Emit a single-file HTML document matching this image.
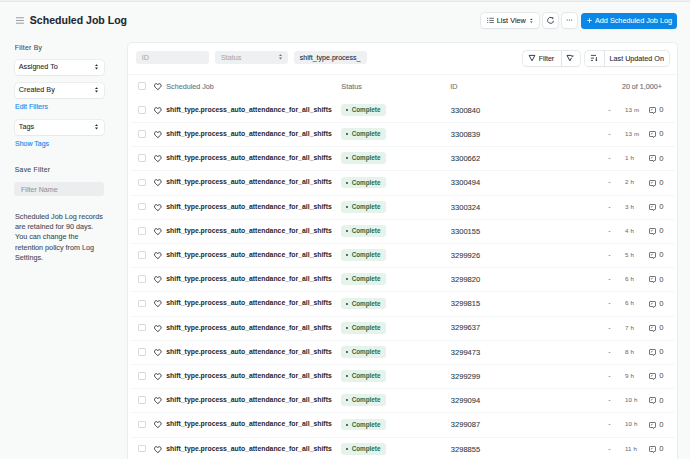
<!DOCTYPE html>
<html><head><meta charset="utf-8"><style>
*{box-sizing:border-box;margin:0;padding:0}
html,body{width:690px;height:459px;overflow:hidden}
body{background:#f8f9f9;font-family:"Liberation Sans",sans-serif;color:#1f272e;position:relative}
.abs{position:absolute;display:block}
.t{position:absolute;white-space:nowrap;line-height:0;-webkit-text-stroke:0.08px currentColor}
.topband{position:absolute;left:0;top:0;width:690px;height:2px;background:#eff0f2;border-bottom:0.6px solid #e6e8ea}
.btn{position:absolute;background:#fff;border-radius:3.5px;box-shadow:0 0 0 0.7px #dfe3e6,0 0.7px 1.2px rgba(0,0,0,0.07)}
.sel{position:absolute;left:14.6px;width:89.4px;height:15.1px;background:#fff;border-radius:3.5px;box-shadow:0 0 0 0.6px #e2e5e8,0 0.6px 1.2px rgba(0,0,0,0.05)}
.card{position:absolute;left:127.2px;top:42.2px;width:551px;height:460px;background:#fff;border-radius:5px;border:0.8px solid #eaecee}
.inp{position:absolute;height:13.3px;background:#eef0f2;border-radius:3px}
.cb{position:absolute;width:7.8px;height:7.8px;border-radius:2px;box-shadow:inset 0 0 0 0.7px #c9ced3}
.pill{position:absolute;width:44.5px;height:11.8px;background:#e5f3ea;border-radius:3px;color:#1f6c47;font-size:6.32px;font-weight:700;line-height:11.8px;padding-left:10.5px;white-space:nowrap}
.dot{position:absolute;left:5.3px;top:5px;width:2px;height:2px;border-radius:1px;background:#1a4a33}
</style></head><body>
<div class="topband"></div>
<svg class="abs" style="left:16px;top:16px" width="8" height="8" viewBox="0 0 8 8"><path d="M0 1.75 H7.9 M0 4.47 H7.9 M0 7.2 H7.9" stroke="#7d858c" stroke-width="0.8"/></svg>
<div class="t" style="left:29.80px;top:20px;font-size:10.56px;color:#1f272e;font-weight:700">Scheduled Job Log</div>
<div class="btn" style="left:481px;top:12.5px;width:58.2px;height:15.6px"></div>
<svg class="abs" style="left:487px;top:17px" width="7" height="6" viewBox="0 0 7 6"><path d="M2.4 1.3 H6.9 M2.4 3.45 H6.9 M2.4 5.6 H6.9" stroke="#333c44" stroke-width="0.75"/><path d="M0.1 1.3 H1.2 M0.1 3.45 H1.2 M0.1 5.6 H1.2" stroke="#333c44" stroke-width="0.75"/></svg>
<div class="t" style="left:496.80px;top:21px;font-size:7.31px;color:#1f272e;">List View</div>
<svg class="abs" style="left:529.5px;top:17.5px" width="3" height="6" viewBox="0 0 3 6"><path d="M0.1 1.9 L1.35 0.6 L2.6 1.9 Z M0.1 3.5 L1.35 5 L2.6 3.5 Z" fill="#333c44"/></svg>
<div class="btn" style="left:542.7px;top:12.5px;width:15.6px;height:15.6px"></div>
<svg class="abs" style="left:546px;top:16px" width="9" height="9" viewBox="0 0 9 9"><path d="M7.46 4.8 A2.9 2.9 0 1 1 6.05 1.79" fill="none" stroke="#2b333a" stroke-width="0.9"/><path d="M5.5 1.3 L7.6 1.5 L6.9 3.6 Z" fill="#2b333a"/></svg>
<div class="btn" style="left:561.8px;top:12.5px;width:15.5px;height:15.6px"></div>
<svg class="abs" style="left:566px;top:19.4px" width="8" height="2" viewBox="0 0 8 2"><circle cx="1.2" cy="1" r="0.6" fill="#333c44"/><circle cx="3.4" cy="1" r="0.6" fill="#333c44"/><circle cx="5.6" cy="1" r="0.6" fill="#333c44"/></svg>
<div class="abs" style="left:581.2px;top:12.5px;width:96px;height:16px;background:#0b87e8;border-radius:3.5px"></div>
<svg class="abs" style="left:587.3px;top:18px" width="5" height="5" viewBox="0 0 5 5"><path d="M2.5 0.2 V4.8 M0.2 2.5 H4.8" stroke="#fff" stroke-width="0.8"/></svg>
<div class="t" style="left:595.00px;top:21px;font-size:7.25px;color:#fff;-webkit-text-stroke:0.05px #fff">Add Scheduled Job Log</div>
<div class="t" style="left:14.80px;top:48px;font-size:6.8px;color:#444c54;letter-spacing:0.28px;-webkit-text-stroke:0.1px #444c54">Filter By</div>
<div class="sel" style="top:59.60px"></div>
<div class="t" style="left:18.80px;top:67px;font-size:7.2px;color:#1f272e;">Assigned To</div>
<svg class="abs" style="left:95.2px;top:64.3px" width="3" height="6" viewBox="0 0 3 6"><path d="M0 2.1 L1.5 0.3 L3 2.1 Z M0 3.6 L1.5 5.5 L3 3.6 Z" fill="#1f272e"/></svg>
<div class="sel" style="top:82.60px"></div>
<div class="t" style="left:18.80px;top:90px;font-size:7.2px;color:#1f272e;">Created By</div>
<svg class="abs" style="left:95.2px;top:87.3px" width="3" height="6" viewBox="0 0 3 6"><path d="M0 2.1 L1.5 0.3 L3 2.1 Z M0 3.6 L1.5 5.5 L3 3.6 Z" fill="#1f272e"/></svg>
<div class="sel" style="top:119.70px"></div>
<div class="t" style="left:18.80px;top:127px;font-size:7.2px;color:#1f272e;">Tags</div>
<svg class="abs" style="left:95.2px;top:124.4px" width="3" height="6" viewBox="0 0 3 6"><path d="M0 2.1 L1.5 0.3 L3 2.1 Z M0 3.6 L1.5 5.5 L3 3.6 Z" fill="#1f272e"/></svg>
<div class="t" style="left:15.00px;top:107px;font-size:7px;color:#2490ef;-webkit-text-stroke:0.15px #2490ef">Edit Filters</div>
<div class="t" style="left:15.00px;top:144px;font-size:7px;color:#2490ef;-webkit-text-stroke:0.15px #2490ef">Show Tags</div>
<div class="t" style="left:14.80px;top:170px;font-size:6.8px;color:#444c54;letter-spacing:0.28px;-webkit-text-stroke:0.1px #444c54">Save Filter</div>
<div class="abs" style="left:14.3px;top:182.2px;width:90px;height:13.5px;background:#ebedef;border-radius:3px"></div>
<div class="t" style="left:21.00px;top:190px;font-size:7.1px;color:#8f979e;">Filter Name</div>
<div class="t" style="left:15.00px;top:217px;font-size:7.23px;color:#434b53;">Scheduled Job Log records</div>
<div class="t" style="left:15.00px;top:227px;font-size:7.23px;color:#434b53;">are retained for 90 days.</div>
<div class="t" style="left:15.00px;top:237px;font-size:7.23px;color:#434b53;">You can change the</div>
<div class="t" style="left:15.00px;top:248px;font-size:7.23px;color:#434b53;">retention policy from Log</div>
<div class="t" style="left:15.00px;top:258px;font-size:7.23px;color:#434b53;">Settings.</div>
<div class="card"></div>
<div class="inp" style="left:136px;top:50.5px;width:73px"></div>
<div class="t" style="left:141.80px;top:58px;font-size:7.2px;color:#a3abb2;">ID</div>
<div class="inp" style="left:215px;top:50.5px;width:73px"></div>
<div class="t" style="left:220.90px;top:58px;font-size:7.2px;color:#a3abb2;">Status</div>
<svg class="abs" style="left:278.6px;top:54.4px" width="3" height="6" viewBox="0 0 3 6"><path d="M0 2.1 L1.5 0.3 L3 2.1 Z M0 3.6 L1.5 5.5 L3 3.6 Z" fill="#687178"/></svg>
<div class="inp" style="left:294px;top:50.5px;width:73px"></div>
<div class="t" style="left:299.70px;top:58px;font-size:7.07px;color:#1f272e;">shift_type.process_</div>
<div class="btn" style="left:522.8px;top:51px;width:56.8px;height:14.9px"></div>
<div class="abs" style="left:560.7px;top:51px;width:0.7px;height:14.9px;background:#e2e5e8"></div>
<svg class="abs" style="left:528px;top:54px" width="8" height="8" viewBox="0 0 8 8"><path d="M1.1 1.4 H6.9 L4 6.8 Z" fill="none" stroke="#2b333a" stroke-width="0.95" stroke-linejoin="round"/></svg>
<div class="t" style="left:538.70px;top:59px;font-size:6.98px;color:#1f272e;">Filter</div>
<svg class="abs" style="left:566px;top:54px" width="8" height="8" viewBox="0 0 8 8"><path d="M5.3 1.4 H1 L3.9 6.8 L5.5 3.8" fill="none" stroke="#2b333a" stroke-width="0.95" stroke-linejoin="round"/><path d="M5.5 1.2 L7.3 3 M7.3 1.2 L5.5 3" stroke="#2b333a" stroke-width="0.8"/></svg>
<div class="btn" style="left:584.8px;top:51px;width:84.6px;height:14.9px"></div>
<div class="abs" style="left:603.5px;top:51px;width:0.7px;height:14.9px;background:#e2e5e8"></div>
<svg class="abs" style="left:590px;top:54px" width="8" height="8" viewBox="0 0 8 8"><path d="M0.9 1.4 H6 M0.9 4.1 H4 M0.9 6.4 H3" stroke="#333c44" stroke-width="0.9"/><path d="M6.4 3 V6.9" stroke="#333c44" stroke-width="0.9"/><path d="M5.2 5.7 L6.4 7.2 L7.6 5.7 Z" fill="#333c44"/></svg>
<div class="t" style="left:609.60px;top:59px;font-size:7.2px;color:#1f272e;">Last Updated On</div>
<div class="abs" style="left:128px;top:74px;width:549px;height:1px;background:#f3f4f5"></div>
<div class="cb" style="left:138px;top:82.2px"></div>
<svg class="abs" style="left:154px;top:82.6px" width="8" height="8" viewBox="0 0 8 8"><path d="M3.8 1.6 C3.3 0.8 2.6 0.6 2 0.7 C1 0.9 0.4 1.8 0.5 2.8 C0.6 3.8 1.5 4.7 3.8 6.6 C6.1 4.7 7 3.8 7.1 2.8 C7.2 1.8 6.6 0.9 5.6 0.7 C5 0.6 4.3 0.8 3.8 1.6 Z" fill="none" stroke="#2b333a" stroke-width="0.95" stroke-linejoin="round"/></svg>
<div class="t" style="left:166.30px;top:87px;font-size:7.2px;color:#687178;">Scheduled Job</div>
<div class="t" style="left:341.30px;top:87px;font-size:7.27px;color:#687178;">Status</div>
<div class="t" style="left:450.30px;top:87px;font-size:7.2px;color:#687178;">ID</div>
<div class="t" style="left:621.90px;top:87px;font-size:7.18px;color:#5f686f;">20 of 1,000+</div>
<div class="cb" style="left:138px;top:105.90px"></div>
<svg class="abs" style="left:154px;top:106.8px" width="8" height="8" viewBox="0 0 8 8"><path d="M3.8 1.6 C3.3 0.8 2.6 0.6 2 0.7 C1 0.9 0.4 1.8 0.5 2.8 C0.6 3.8 1.5 4.7 3.8 6.6 C6.1 4.7 7 3.8 7.1 2.8 C7.2 1.8 6.6 0.9 5.6 0.7 C5 0.6 4.3 0.8 3.8 1.6 Z" fill="none" stroke="#2b333a" stroke-width="0.95" stroke-linejoin="round"/></svg>
<div class="t" style="left:166.30px;top:110px;font-size:6.86px;color:#1f272e;font-weight:700;-webkit-text-stroke:0">shift_type.process_auto_attendance_for_all_shifts</div>
<div class="pill" style="left:341.2px;top:104.00px"><span class="dot"></span>Complete</div>
<div class="t" style="left:450.80px;top:111px;font-size:7.55px;color:#333c44;">3300840</div>
<div class="t" style="left:608.20px;top:110px;font-size:7px;color:#687178;">-</div>
<div class="t" style="left:625.00px;top:110px;font-size:6.2px;color:#687178;letter-spacing:0.12px;-webkit-text-stroke:0.05px #687178">13 m</div>
<svg class="abs" style="left:648px;top:106.0px" width="9" height="9" viewBox="0 0 9 9"><path d="M2.1 1.5 H6.9 Q7.5 1.5 7.5 2.1 V5.9 Q7.5 6.5 6.9 6.5 H6.2 L5.6 7.6 L5.1 6.5 H2.1 Q1.5 6.5 1.5 5.9 V2.1 Q1.5 1.5 2.1 1.5 Z" fill="none" stroke="#525a62" stroke-width="0.85" stroke-linejoin="round"/><path d="M2.9 4.2 L4.6 3.2" stroke="#525a62" stroke-width="0.8"/></svg>
<div class="t" style="left:659.30px;top:110px;font-size:7.6px;color:#3f474e;-webkit-text-stroke:0">0</div>
<div class="abs" style="left:130.6px;top:121.90px;width:544.2px;height:1px;background:#f5f6f7"></div>
<div class="cb" style="left:138px;top:130.10px"></div>
<svg class="abs" style="left:154px;top:131.0px" width="8" height="8" viewBox="0 0 8 8"><path d="M3.8 1.6 C3.3 0.8 2.6 0.6 2 0.7 C1 0.9 0.4 1.8 0.5 2.8 C0.6 3.8 1.5 4.7 3.8 6.6 C6.1 4.7 7 3.8 7.1 2.8 C7.2 1.8 6.6 0.9 5.6 0.7 C5 0.6 4.3 0.8 3.8 1.6 Z" fill="none" stroke="#2b333a" stroke-width="0.95" stroke-linejoin="round"/></svg>
<div class="t" style="left:166.30px;top:134px;font-size:6.86px;color:#1f272e;font-weight:700;-webkit-text-stroke:0">shift_type.process_auto_attendance_for_all_shifts</div>
<div class="pill" style="left:341.2px;top:128.20px"><span class="dot"></span>Complete</div>
<div class="t" style="left:450.80px;top:135px;font-size:7.55px;color:#333c44;">3300839</div>
<div class="t" style="left:608.20px;top:134px;font-size:7px;color:#687178;">-</div>
<div class="t" style="left:625.00px;top:134px;font-size:6.2px;color:#687178;letter-spacing:0.12px;-webkit-text-stroke:0.05px #687178">13 m</div>
<svg class="abs" style="left:648px;top:130.2px" width="9" height="9" viewBox="0 0 9 9"><path d="M2.1 1.5 H6.9 Q7.5 1.5 7.5 2.1 V5.9 Q7.5 6.5 6.9 6.5 H6.2 L5.6 7.6 L5.1 6.5 H2.1 Q1.5 6.5 1.5 5.9 V2.1 Q1.5 1.5 2.1 1.5 Z" fill="none" stroke="#525a62" stroke-width="0.85" stroke-linejoin="round"/><path d="M2.9 4.2 L4.6 3.2" stroke="#525a62" stroke-width="0.8"/></svg>
<div class="t" style="left:659.30px;top:134px;font-size:7.6px;color:#3f474e;-webkit-text-stroke:0">0</div>
<div class="abs" style="left:130.6px;top:146.10px;width:544.2px;height:1px;background:#f5f6f7"></div>
<div class="cb" style="left:138px;top:154.30px"></div>
<svg class="abs" style="left:154px;top:155.2px" width="8" height="8" viewBox="0 0 8 8"><path d="M3.8 1.6 C3.3 0.8 2.6 0.6 2 0.7 C1 0.9 0.4 1.8 0.5 2.8 C0.6 3.8 1.5 4.7 3.8 6.6 C6.1 4.7 7 3.8 7.1 2.8 C7.2 1.8 6.6 0.9 5.6 0.7 C5 0.6 4.3 0.8 3.8 1.6 Z" fill="none" stroke="#2b333a" stroke-width="0.95" stroke-linejoin="round"/></svg>
<div class="t" style="left:166.30px;top:158px;font-size:6.86px;color:#1f272e;font-weight:700;-webkit-text-stroke:0">shift_type.process_auto_attendance_for_all_shifts</div>
<div class="pill" style="left:341.2px;top:152.40px"><span class="dot"></span>Complete</div>
<div class="t" style="left:450.80px;top:159px;font-size:7.55px;color:#333c44;">3300662</div>
<div class="t" style="left:608.20px;top:158px;font-size:7px;color:#687178;">-</div>
<div class="t" style="left:625.00px;top:158px;font-size:6.2px;color:#687178;letter-spacing:0.12px;-webkit-text-stroke:0.05px #687178">1 h</div>
<svg class="abs" style="left:648px;top:154.4px" width="9" height="9" viewBox="0 0 9 9"><path d="M2.1 1.5 H6.9 Q7.5 1.5 7.5 2.1 V5.9 Q7.5 6.5 6.9 6.5 H6.2 L5.6 7.6 L5.1 6.5 H2.1 Q1.5 6.5 1.5 5.9 V2.1 Q1.5 1.5 2.1 1.5 Z" fill="none" stroke="#525a62" stroke-width="0.85" stroke-linejoin="round"/><path d="M2.9 4.2 L4.6 3.2" stroke="#525a62" stroke-width="0.8"/></svg>
<div class="t" style="left:659.30px;top:159px;font-size:7.6px;color:#3f474e;-webkit-text-stroke:0">0</div>
<div class="abs" style="left:130.6px;top:170.30px;width:544.2px;height:1px;background:#f5f6f7"></div>
<div class="cb" style="left:138px;top:178.50px"></div>
<svg class="abs" style="left:154px;top:179.4px" width="8" height="8" viewBox="0 0 8 8"><path d="M3.8 1.6 C3.3 0.8 2.6 0.6 2 0.7 C1 0.9 0.4 1.8 0.5 2.8 C0.6 3.8 1.5 4.7 3.8 6.6 C6.1 4.7 7 3.8 7.1 2.8 C7.2 1.8 6.6 0.9 5.6 0.7 C5 0.6 4.3 0.8 3.8 1.6 Z" fill="none" stroke="#2b333a" stroke-width="0.95" stroke-linejoin="round"/></svg>
<div class="t" style="left:166.30px;top:182px;font-size:6.86px;color:#1f272e;font-weight:700;-webkit-text-stroke:0">shift_type.process_auto_attendance_for_all_shifts</div>
<div class="pill" style="left:341.2px;top:176.60px"><span class="dot"></span>Complete</div>
<div class="t" style="left:450.80px;top:183px;font-size:7.55px;color:#333c44;">3300494</div>
<div class="t" style="left:608.20px;top:182px;font-size:7px;color:#687178;">-</div>
<div class="t" style="left:625.00px;top:182px;font-size:6.2px;color:#687178;letter-spacing:0.12px;-webkit-text-stroke:0.05px #687178">2 h</div>
<svg class="abs" style="left:648px;top:178.6px" width="9" height="9" viewBox="0 0 9 9"><path d="M2.1 1.5 H6.9 Q7.5 1.5 7.5 2.1 V5.9 Q7.5 6.5 6.9 6.5 H6.2 L5.6 7.6 L5.1 6.5 H2.1 Q1.5 6.5 1.5 5.9 V2.1 Q1.5 1.5 2.1 1.5 Z" fill="none" stroke="#525a62" stroke-width="0.85" stroke-linejoin="round"/><path d="M2.9 4.2 L4.6 3.2" stroke="#525a62" stroke-width="0.8"/></svg>
<div class="t" style="left:659.30px;top:183px;font-size:7.6px;color:#3f474e;-webkit-text-stroke:0">0</div>
<div class="abs" style="left:130.6px;top:194.50px;width:544.2px;height:1px;background:#f5f6f7"></div>
<div class="cb" style="left:138px;top:202.70px"></div>
<svg class="abs" style="left:154px;top:203.6px" width="8" height="8" viewBox="0 0 8 8"><path d="M3.8 1.6 C3.3 0.8 2.6 0.6 2 0.7 C1 0.9 0.4 1.8 0.5 2.8 C0.6 3.8 1.5 4.7 3.8 6.6 C6.1 4.7 7 3.8 7.1 2.8 C7.2 1.8 6.6 0.9 5.6 0.7 C5 0.6 4.3 0.8 3.8 1.6 Z" fill="none" stroke="#2b333a" stroke-width="0.95" stroke-linejoin="round"/></svg>
<div class="t" style="left:166.30px;top:207px;font-size:6.86px;color:#1f272e;font-weight:700;-webkit-text-stroke:0">shift_type.process_auto_attendance_for_all_shifts</div>
<div class="pill" style="left:341.2px;top:200.80px"><span class="dot"></span>Complete</div>
<div class="t" style="left:450.80px;top:208px;font-size:7.55px;color:#333c44;">3300324</div>
<div class="t" style="left:608.20px;top:207px;font-size:7px;color:#687178;">-</div>
<div class="t" style="left:625.00px;top:207px;font-size:6.2px;color:#687178;letter-spacing:0.12px;-webkit-text-stroke:0.05px #687178">3 h</div>
<svg class="abs" style="left:648px;top:202.8px" width="9" height="9" viewBox="0 0 9 9"><path d="M2.1 1.5 H6.9 Q7.5 1.5 7.5 2.1 V5.9 Q7.5 6.5 6.9 6.5 H6.2 L5.6 7.6 L5.1 6.5 H2.1 Q1.5 6.5 1.5 5.9 V2.1 Q1.5 1.5 2.1 1.5 Z" fill="none" stroke="#525a62" stroke-width="0.85" stroke-linejoin="round"/><path d="M2.9 4.2 L4.6 3.2" stroke="#525a62" stroke-width="0.8"/></svg>
<div class="t" style="left:659.30px;top:207px;font-size:7.6px;color:#3f474e;-webkit-text-stroke:0">0</div>
<div class="abs" style="left:130.6px;top:218.70px;width:544.2px;height:1px;background:#f5f6f7"></div>
<div class="cb" style="left:138px;top:226.90px"></div>
<svg class="abs" style="left:154px;top:227.8px" width="8" height="8" viewBox="0 0 8 8"><path d="M3.8 1.6 C3.3 0.8 2.6 0.6 2 0.7 C1 0.9 0.4 1.8 0.5 2.8 C0.6 3.8 1.5 4.7 3.8 6.6 C6.1 4.7 7 3.8 7.1 2.8 C7.2 1.8 6.6 0.9 5.6 0.7 C5 0.6 4.3 0.8 3.8 1.6 Z" fill="none" stroke="#2b333a" stroke-width="0.95" stroke-linejoin="round"/></svg>
<div class="t" style="left:166.30px;top:231px;font-size:6.86px;color:#1f272e;font-weight:700;-webkit-text-stroke:0">shift_type.process_auto_attendance_for_all_shifts</div>
<div class="pill" style="left:341.2px;top:225.00px"><span class="dot"></span>Complete</div>
<div class="t" style="left:450.80px;top:232px;font-size:7.55px;color:#333c44;">3300155</div>
<div class="t" style="left:608.20px;top:231px;font-size:7px;color:#687178;">-</div>
<div class="t" style="left:625.00px;top:231px;font-size:6.2px;color:#687178;letter-spacing:0.12px;-webkit-text-stroke:0.05px #687178">4 h</div>
<svg class="abs" style="left:648px;top:227.0px" width="9" height="9" viewBox="0 0 9 9"><path d="M2.1 1.5 H6.9 Q7.5 1.5 7.5 2.1 V5.9 Q7.5 6.5 6.9 6.5 H6.2 L5.6 7.6 L5.1 6.5 H2.1 Q1.5 6.5 1.5 5.9 V2.1 Q1.5 1.5 2.1 1.5 Z" fill="none" stroke="#525a62" stroke-width="0.85" stroke-linejoin="round"/><path d="M2.9 4.2 L4.6 3.2" stroke="#525a62" stroke-width="0.8"/></svg>
<div class="t" style="left:659.30px;top:231px;font-size:7.6px;color:#3f474e;-webkit-text-stroke:0">0</div>
<div class="abs" style="left:130.6px;top:242.90px;width:544.2px;height:1px;background:#f5f6f7"></div>
<div class="cb" style="left:138px;top:251.10px"></div>
<svg class="abs" style="left:154px;top:252.0px" width="8" height="8" viewBox="0 0 8 8"><path d="M3.8 1.6 C3.3 0.8 2.6 0.6 2 0.7 C1 0.9 0.4 1.8 0.5 2.8 C0.6 3.8 1.5 4.7 3.8 6.6 C6.1 4.7 7 3.8 7.1 2.8 C7.2 1.8 6.6 0.9 5.6 0.7 C5 0.6 4.3 0.8 3.8 1.6 Z" fill="none" stroke="#2b333a" stroke-width="0.95" stroke-linejoin="round"/></svg>
<div class="t" style="left:166.30px;top:255px;font-size:6.86px;color:#1f272e;font-weight:700;-webkit-text-stroke:0">shift_type.process_auto_attendance_for_all_shifts</div>
<div class="pill" style="left:341.2px;top:249.20px"><span class="dot"></span>Complete</div>
<div class="t" style="left:450.80px;top:256px;font-size:7.55px;color:#333c44;">3299926</div>
<div class="t" style="left:608.20px;top:255px;font-size:7px;color:#687178;">-</div>
<div class="t" style="left:625.00px;top:255px;font-size:6.2px;color:#687178;letter-spacing:0.12px;-webkit-text-stroke:0.05px #687178">5 h</div>
<svg class="abs" style="left:648px;top:251.2px" width="9" height="9" viewBox="0 0 9 9"><path d="M2.1 1.5 H6.9 Q7.5 1.5 7.5 2.1 V5.9 Q7.5 6.5 6.9 6.5 H6.2 L5.6 7.6 L5.1 6.5 H2.1 Q1.5 6.5 1.5 5.9 V2.1 Q1.5 1.5 2.1 1.5 Z" fill="none" stroke="#525a62" stroke-width="0.85" stroke-linejoin="round"/><path d="M2.9 4.2 L4.6 3.2" stroke="#525a62" stroke-width="0.8"/></svg>
<div class="t" style="left:659.30px;top:255px;font-size:7.6px;color:#3f474e;-webkit-text-stroke:0">0</div>
<div class="abs" style="left:130.6px;top:267.10px;width:544.2px;height:1px;background:#f5f6f7"></div>
<div class="cb" style="left:138px;top:275.30px"></div>
<svg class="abs" style="left:154px;top:276.2px" width="8" height="8" viewBox="0 0 8 8"><path d="M3.8 1.6 C3.3 0.8 2.6 0.6 2 0.7 C1 0.9 0.4 1.8 0.5 2.8 C0.6 3.8 1.5 4.7 3.8 6.6 C6.1 4.7 7 3.8 7.1 2.8 C7.2 1.8 6.6 0.9 5.6 0.7 C5 0.6 4.3 0.8 3.8 1.6 Z" fill="none" stroke="#2b333a" stroke-width="0.95" stroke-linejoin="round"/></svg>
<div class="t" style="left:166.30px;top:279px;font-size:6.86px;color:#1f272e;font-weight:700;-webkit-text-stroke:0">shift_type.process_auto_attendance_for_all_shifts</div>
<div class="pill" style="left:341.2px;top:273.40px"><span class="dot"></span>Complete</div>
<div class="t" style="left:450.80px;top:280px;font-size:7.55px;color:#333c44;">3299820</div>
<div class="t" style="left:608.20px;top:279px;font-size:7px;color:#687178;">-</div>
<div class="t" style="left:625.00px;top:279px;font-size:6.2px;color:#687178;letter-spacing:0.12px;-webkit-text-stroke:0.05px #687178">6 h</div>
<svg class="abs" style="left:648px;top:275.4px" width="9" height="9" viewBox="0 0 9 9"><path d="M2.1 1.5 H6.9 Q7.5 1.5 7.5 2.1 V5.9 Q7.5 6.5 6.9 6.5 H6.2 L5.6 7.6 L5.1 6.5 H2.1 Q1.5 6.5 1.5 5.9 V2.1 Q1.5 1.5 2.1 1.5 Z" fill="none" stroke="#525a62" stroke-width="0.85" stroke-linejoin="round"/><path d="M2.9 4.2 L4.6 3.2" stroke="#525a62" stroke-width="0.8"/></svg>
<div class="t" style="left:659.30px;top:280px;font-size:7.6px;color:#3f474e;-webkit-text-stroke:0">0</div>
<div class="abs" style="left:130.6px;top:291.30px;width:544.2px;height:1px;background:#f5f6f7"></div>
<div class="cb" style="left:138px;top:299.50px"></div>
<svg class="abs" style="left:154px;top:300.4px" width="8" height="8" viewBox="0 0 8 8"><path d="M3.8 1.6 C3.3 0.8 2.6 0.6 2 0.7 C1 0.9 0.4 1.8 0.5 2.8 C0.6 3.8 1.5 4.7 3.8 6.6 C6.1 4.7 7 3.8 7.1 2.8 C7.2 1.8 6.6 0.9 5.6 0.7 C5 0.6 4.3 0.8 3.8 1.6 Z" fill="none" stroke="#2b333a" stroke-width="0.95" stroke-linejoin="round"/></svg>
<div class="t" style="left:166.30px;top:303px;font-size:6.86px;color:#1f272e;font-weight:700;-webkit-text-stroke:0">shift_type.process_auto_attendance_for_all_shifts</div>
<div class="pill" style="left:341.2px;top:297.60px"><span class="dot"></span>Complete</div>
<div class="t" style="left:450.80px;top:304px;font-size:7.55px;color:#333c44;">3299815</div>
<div class="t" style="left:608.20px;top:303px;font-size:7px;color:#687178;">-</div>
<div class="t" style="left:625.00px;top:303px;font-size:6.2px;color:#687178;letter-spacing:0.12px;-webkit-text-stroke:0.05px #687178">6 h</div>
<svg class="abs" style="left:648px;top:299.6px" width="9" height="9" viewBox="0 0 9 9"><path d="M2.1 1.5 H6.9 Q7.5 1.5 7.5 2.1 V5.9 Q7.5 6.5 6.9 6.5 H6.2 L5.6 7.6 L5.1 6.5 H2.1 Q1.5 6.5 1.5 5.9 V2.1 Q1.5 1.5 2.1 1.5 Z" fill="none" stroke="#525a62" stroke-width="0.85" stroke-linejoin="round"/><path d="M2.9 4.2 L4.6 3.2" stroke="#525a62" stroke-width="0.8"/></svg>
<div class="t" style="left:659.30px;top:304px;font-size:7.6px;color:#3f474e;-webkit-text-stroke:0">0</div>
<div class="abs" style="left:130.6px;top:315.50px;width:544.2px;height:1px;background:#f5f6f7"></div>
<div class="cb" style="left:138px;top:323.70px"></div>
<svg class="abs" style="left:154px;top:324.6px" width="8" height="8" viewBox="0 0 8 8"><path d="M3.8 1.6 C3.3 0.8 2.6 0.6 2 0.7 C1 0.9 0.4 1.8 0.5 2.8 C0.6 3.8 1.5 4.7 3.8 6.6 C6.1 4.7 7 3.8 7.1 2.8 C7.2 1.8 6.6 0.9 5.6 0.7 C5 0.6 4.3 0.8 3.8 1.6 Z" fill="none" stroke="#2b333a" stroke-width="0.95" stroke-linejoin="round"/></svg>
<div class="t" style="left:166.30px;top:328px;font-size:6.86px;color:#1f272e;font-weight:700;-webkit-text-stroke:0">shift_type.process_auto_attendance_for_all_shifts</div>
<div class="pill" style="left:341.2px;top:321.80px"><span class="dot"></span>Complete</div>
<div class="t" style="left:450.80px;top:328px;font-size:7.55px;color:#333c44;">3299637</div>
<div class="t" style="left:608.20px;top:328px;font-size:7px;color:#687178;">-</div>
<div class="t" style="left:625.00px;top:328px;font-size:6.2px;color:#687178;letter-spacing:0.12px;-webkit-text-stroke:0.05px #687178">7 h</div>
<svg class="abs" style="left:648px;top:323.8px" width="9" height="9" viewBox="0 0 9 9"><path d="M2.1 1.5 H6.9 Q7.5 1.5 7.5 2.1 V5.9 Q7.5 6.5 6.9 6.5 H6.2 L5.6 7.6 L5.1 6.5 H2.1 Q1.5 6.5 1.5 5.9 V2.1 Q1.5 1.5 2.1 1.5 Z" fill="none" stroke="#525a62" stroke-width="0.85" stroke-linejoin="round"/><path d="M2.9 4.2 L4.6 3.2" stroke="#525a62" stroke-width="0.8"/></svg>
<div class="t" style="left:659.30px;top:328px;font-size:7.6px;color:#3f474e;-webkit-text-stroke:0">0</div>
<div class="abs" style="left:130.6px;top:339.70px;width:544.2px;height:1px;background:#f5f6f7"></div>
<div class="cb" style="left:138px;top:347.90px"></div>
<svg class="abs" style="left:154px;top:348.8px" width="8" height="8" viewBox="0 0 8 8"><path d="M3.8 1.6 C3.3 0.8 2.6 0.6 2 0.7 C1 0.9 0.4 1.8 0.5 2.8 C0.6 3.8 1.5 4.7 3.8 6.6 C6.1 4.7 7 3.8 7.1 2.8 C7.2 1.8 6.6 0.9 5.6 0.7 C5 0.6 4.3 0.8 3.8 1.6 Z" fill="none" stroke="#2b333a" stroke-width="0.95" stroke-linejoin="round"/></svg>
<div class="t" style="left:166.30px;top:352px;font-size:6.86px;color:#1f272e;font-weight:700;-webkit-text-stroke:0">shift_type.process_auto_attendance_for_all_shifts</div>
<div class="pill" style="left:341.2px;top:346.00px"><span class="dot"></span>Complete</div>
<div class="t" style="left:450.80px;top:353px;font-size:7.55px;color:#333c44;">3299473</div>
<div class="t" style="left:608.20px;top:352px;font-size:7px;color:#687178;">-</div>
<div class="t" style="left:625.00px;top:352px;font-size:6.2px;color:#687178;letter-spacing:0.12px;-webkit-text-stroke:0.05px #687178">8 h</div>
<svg class="abs" style="left:648px;top:348.0px" width="9" height="9" viewBox="0 0 9 9"><path d="M2.1 1.5 H6.9 Q7.5 1.5 7.5 2.1 V5.9 Q7.5 6.5 6.9 6.5 H6.2 L5.6 7.6 L5.1 6.5 H2.1 Q1.5 6.5 1.5 5.9 V2.1 Q1.5 1.5 2.1 1.5 Z" fill="none" stroke="#525a62" stroke-width="0.85" stroke-linejoin="round"/><path d="M2.9 4.2 L4.6 3.2" stroke="#525a62" stroke-width="0.8"/></svg>
<div class="t" style="left:659.30px;top:352px;font-size:7.6px;color:#3f474e;-webkit-text-stroke:0">0</div>
<div class="abs" style="left:130.6px;top:363.90px;width:544.2px;height:1px;background:#f5f6f7"></div>
<div class="cb" style="left:138px;top:372.10px"></div>
<svg class="abs" style="left:154px;top:373.0px" width="8" height="8" viewBox="0 0 8 8"><path d="M3.8 1.6 C3.3 0.8 2.6 0.6 2 0.7 C1 0.9 0.4 1.8 0.5 2.8 C0.6 3.8 1.5 4.7 3.8 6.6 C6.1 4.7 7 3.8 7.1 2.8 C7.2 1.8 6.6 0.9 5.6 0.7 C5 0.6 4.3 0.8 3.8 1.6 Z" fill="none" stroke="#2b333a" stroke-width="0.95" stroke-linejoin="round"/></svg>
<div class="t" style="left:166.30px;top:376px;font-size:6.86px;color:#1f272e;font-weight:700;-webkit-text-stroke:0">shift_type.process_auto_attendance_for_all_shifts</div>
<div class="pill" style="left:341.2px;top:370.20px"><span class="dot"></span>Complete</div>
<div class="t" style="left:450.80px;top:377px;font-size:7.55px;color:#333c44;">3299299</div>
<div class="t" style="left:608.20px;top:376px;font-size:7px;color:#687178;">-</div>
<div class="t" style="left:625.00px;top:376px;font-size:6.2px;color:#687178;letter-spacing:0.12px;-webkit-text-stroke:0.05px #687178">9 h</div>
<svg class="abs" style="left:648px;top:372.2px" width="9" height="9" viewBox="0 0 9 9"><path d="M2.1 1.5 H6.9 Q7.5 1.5 7.5 2.1 V5.9 Q7.5 6.5 6.9 6.5 H6.2 L5.6 7.6 L5.1 6.5 H2.1 Q1.5 6.5 1.5 5.9 V2.1 Q1.5 1.5 2.1 1.5 Z" fill="none" stroke="#525a62" stroke-width="0.85" stroke-linejoin="round"/><path d="M2.9 4.2 L4.6 3.2" stroke="#525a62" stroke-width="0.8"/></svg>
<div class="t" style="left:659.30px;top:376px;font-size:7.6px;color:#3f474e;-webkit-text-stroke:0">0</div>
<div class="abs" style="left:130.6px;top:388.10px;width:544.2px;height:1px;background:#f5f6f7"></div>
<div class="cb" style="left:138px;top:396.30px"></div>
<svg class="abs" style="left:154px;top:397.2px" width="8" height="8" viewBox="0 0 8 8"><path d="M3.8 1.6 C3.3 0.8 2.6 0.6 2 0.7 C1 0.9 0.4 1.8 0.5 2.8 C0.6 3.8 1.5 4.7 3.8 6.6 C6.1 4.7 7 3.8 7.1 2.8 C7.2 1.8 6.6 0.9 5.6 0.7 C5 0.6 4.3 0.8 3.8 1.6 Z" fill="none" stroke="#2b333a" stroke-width="0.95" stroke-linejoin="round"/></svg>
<div class="t" style="left:166.30px;top:400px;font-size:6.86px;color:#1f272e;font-weight:700;-webkit-text-stroke:0">shift_type.process_auto_attendance_for_all_shifts</div>
<div class="pill" style="left:341.2px;top:394.40px"><span class="dot"></span>Complete</div>
<div class="t" style="left:450.80px;top:401px;font-size:7.55px;color:#333c44;">3299094</div>
<div class="t" style="left:608.20px;top:400px;font-size:7px;color:#687178;">-</div>
<div class="t" style="left:625.00px;top:400px;font-size:6.2px;color:#687178;letter-spacing:0.12px;-webkit-text-stroke:0.05px #687178">10 h</div>
<svg class="abs" style="left:648px;top:396.4px" width="9" height="9" viewBox="0 0 9 9"><path d="M2.1 1.5 H6.9 Q7.5 1.5 7.5 2.1 V5.9 Q7.5 6.5 6.9 6.5 H6.2 L5.6 7.6 L5.1 6.5 H2.1 Q1.5 6.5 1.5 5.9 V2.1 Q1.5 1.5 2.1 1.5 Z" fill="none" stroke="#525a62" stroke-width="0.85" stroke-linejoin="round"/><path d="M2.9 4.2 L4.6 3.2" stroke="#525a62" stroke-width="0.8"/></svg>
<div class="t" style="left:659.30px;top:401px;font-size:7.6px;color:#3f474e;-webkit-text-stroke:0">0</div>
<div class="abs" style="left:130.6px;top:412.30px;width:544.2px;height:1px;background:#f5f6f7"></div>
<div class="cb" style="left:138px;top:420.50px"></div>
<svg class="abs" style="left:154px;top:421.4px" width="8" height="8" viewBox="0 0 8 8"><path d="M3.8 1.6 C3.3 0.8 2.6 0.6 2 0.7 C1 0.9 0.4 1.8 0.5 2.8 C0.6 3.8 1.5 4.7 3.8 6.6 C6.1 4.7 7 3.8 7.1 2.8 C7.2 1.8 6.6 0.9 5.6 0.7 C5 0.6 4.3 0.8 3.8 1.6 Z" fill="none" stroke="#2b333a" stroke-width="0.95" stroke-linejoin="round"/></svg>
<div class="t" style="left:166.30px;top:424px;font-size:6.86px;color:#1f272e;font-weight:700;-webkit-text-stroke:0">shift_type.process_auto_attendance_for_all_shifts</div>
<div class="pill" style="left:341.2px;top:418.60px"><span class="dot"></span>Complete</div>
<div class="t" style="left:450.80px;top:425px;font-size:7.55px;color:#333c44;">3299087</div>
<div class="t" style="left:608.20px;top:424px;font-size:7px;color:#687178;">-</div>
<div class="t" style="left:625.00px;top:424px;font-size:6.2px;color:#687178;letter-spacing:0.12px;-webkit-text-stroke:0.05px #687178">10 h</div>
<svg class="abs" style="left:648px;top:420.6px" width="9" height="9" viewBox="0 0 9 9"><path d="M2.1 1.5 H6.9 Q7.5 1.5 7.5 2.1 V5.9 Q7.5 6.5 6.9 6.5 H6.2 L5.6 7.6 L5.1 6.5 H2.1 Q1.5 6.5 1.5 5.9 V2.1 Q1.5 1.5 2.1 1.5 Z" fill="none" stroke="#525a62" stroke-width="0.85" stroke-linejoin="round"/><path d="M2.9 4.2 L4.6 3.2" stroke="#525a62" stroke-width="0.8"/></svg>
<div class="t" style="left:659.30px;top:425px;font-size:7.6px;color:#3f474e;-webkit-text-stroke:0">0</div>
<div class="abs" style="left:130.6px;top:436.50px;width:544.2px;height:1px;background:#f5f6f7"></div>
<div class="cb" style="left:138px;top:444.70px"></div>
<svg class="abs" style="left:154px;top:445.6px" width="8" height="8" viewBox="0 0 8 8"><path d="M3.8 1.6 C3.3 0.8 2.6 0.6 2 0.7 C1 0.9 0.4 1.8 0.5 2.8 C0.6 3.8 1.5 4.7 3.8 6.6 C6.1 4.7 7 3.8 7.1 2.8 C7.2 1.8 6.6 0.9 5.6 0.7 C5 0.6 4.3 0.8 3.8 1.6 Z" fill="none" stroke="#2b333a" stroke-width="0.95" stroke-linejoin="round"/></svg>
<div class="t" style="left:166.30px;top:449px;font-size:6.86px;color:#1f272e;font-weight:700;-webkit-text-stroke:0">shift_type.process_auto_attendance_for_all_shifts</div>
<div class="pill" style="left:341.2px;top:442.80px"><span class="dot"></span>Complete</div>
<div class="t" style="left:450.80px;top:450px;font-size:7.55px;color:#333c44;">3298855</div>
<div class="t" style="left:608.20px;top:449px;font-size:7px;color:#687178;">-</div>
<div class="t" style="left:625.00px;top:449px;font-size:6.2px;color:#687178;letter-spacing:0.12px;-webkit-text-stroke:0.05px #687178">11 h</div>
<svg class="abs" style="left:648px;top:444.8px" width="9" height="9" viewBox="0 0 9 9"><path d="M2.1 1.5 H6.9 Q7.5 1.5 7.5 2.1 V5.9 Q7.5 6.5 6.9 6.5 H6.2 L5.6 7.6 L5.1 6.5 H2.1 Q1.5 6.5 1.5 5.9 V2.1 Q1.5 1.5 2.1 1.5 Z" fill="none" stroke="#525a62" stroke-width="0.85" stroke-linejoin="round"/><path d="M2.9 4.2 L4.6 3.2" stroke="#525a62" stroke-width="0.8"/></svg>
<div class="t" style="left:659.30px;top:449px;font-size:7.6px;color:#3f474e;-webkit-text-stroke:0">0</div>
<div class="abs" style="left:130.6px;top:460.70px;width:544.2px;height:1px;background:#f5f6f7"></div>
</body></html>
